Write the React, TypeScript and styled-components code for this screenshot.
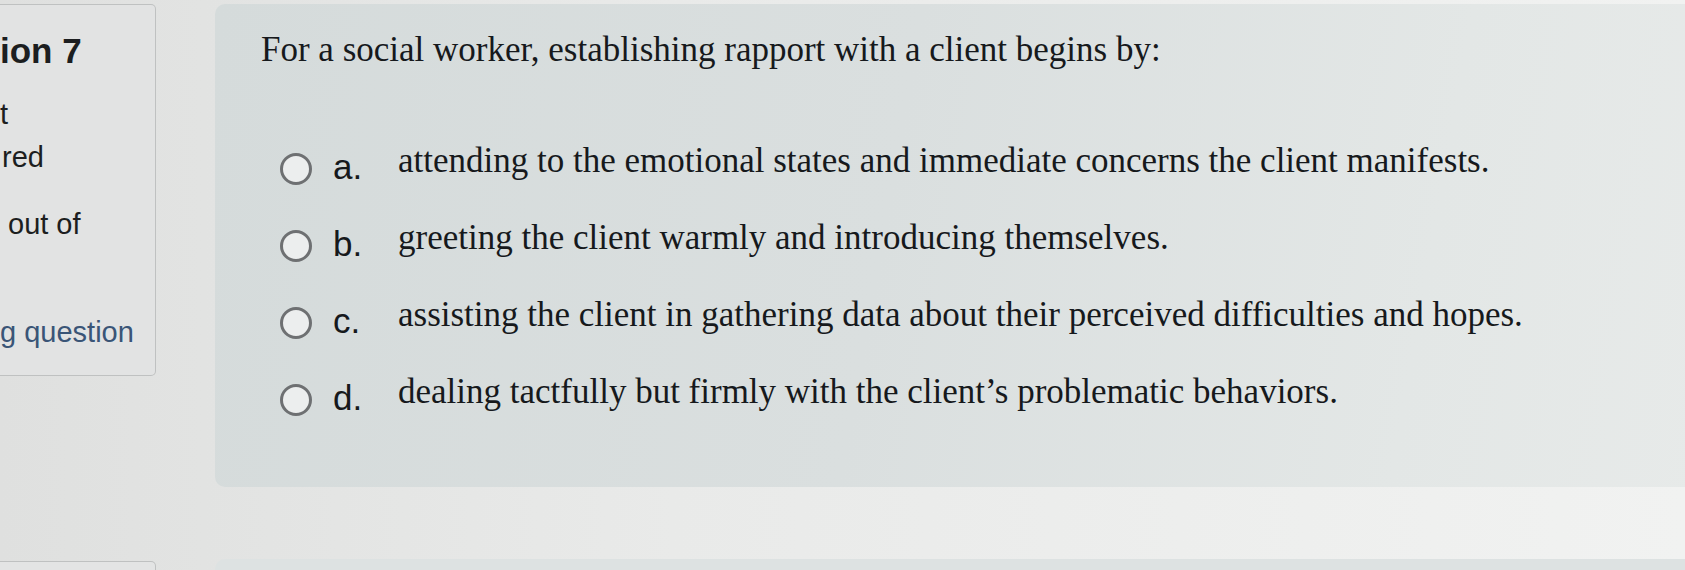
import { Component } from "react";
import styled, { createGlobalStyle } from "styled-components";


interface IAnswer
{
    letter : string
    text : string
}

const answers : IAnswer[] =
[
    { letter: "a.", text: "attending to the emotional states and immediate concerns the client manifests." },
    { letter: "b.", text: "greeting the client warmly and introducing themselves." },
    { letter: "c.", text: "assisting the client in gathering data about their perceived difficulties and hopes." },
    { letter: "d.", text: "dealing tactfully but firmly with the client\u2019s problematic behaviors." },
];

class App extends Component
{
    render() : JSX.Element
    {
        return (
            <>
                <GlobalStyle/>
                <Page>
                    <Sidebar>
                        <InfoCard>
                            <QuestionNo>ion 7</QuestionNo>
                            <InfoLine $gap={22} $indent={0}>t</InfoLine>
                            <InfoLine $gap={0} $indent={2}>red</InfoLine>
                            <InfoLine $gap={24} $indent={8}>out of</InfoLine>
                            <FlagLink href="#">g question</FlagLink>
                        </InfoCard>
                        <NextInfoCard/>
                    </Sidebar>

                    <Main>
                        <QuestionCard>
                            <QuestionText>For a social worker, establishing rapport with a client begins by:</QuestionText>
                            <Answers>
                                {answers.map(answer => (
                                    <AnswerRow key={answer.letter}>
                                        <Radio type="radio" name="q7"/>
                                        <Letter>{answer.letter}</Letter>
                                        <AnswerText>{answer.text}</AnswerText>
                                    </AnswerRow>
                                ))}
                            </Answers>
                        </QuestionCard>
                        <NextCard/>
                    </Main>
                </Page>
            </>
        );
    }
}

const GlobalStyle = createGlobalStyle`
    html, body
    {
        margin: 0;
        padding: 0;
    }

    body
    {
        width: 1685px;
        height: 570px;
        overflow: hidden;
        background: linear-gradient(90deg, #dfe0df 0%, #e9eae9 40%, #f1f2f1 100%);
    }
`;

const Page = styled.div`
    display: flex;
    gap: 59px;
    height: 570px;
    overflow: hidden;
`;

const Sidebar = styled.aside`
    display: flex;
    flex-direction: column;
    flex: 0 0 156px;
`;

const InfoCard = styled.div`
    display: flex;
    flex-direction: column;
    flex-shrink: 0;
    height: 372px;
    box-sizing: border-box;
    margin-top: 4px;
    padding-top: 26px;
    overflow: hidden;

    background: #e2e3e3;
    border: 1px solid #bfc1c1;
    border-left: none;
    border-radius: 0 5px 5px 0;

    font-family: "Liberation Sans", Arial, sans-serif;
    color: #1c1e20;
`;

const QuestionNo = styled.h3`
    margin: 0;
    font-size: 35px;
    line-height: 40px;
    font-weight: 700;
    white-space: nowrap;
`;

const InfoLine = styled.div<{ $gap : number, $indent : number }>`
    margin: ${props => props.$gap}px 0 0 ${props => props.$indent}px;
    font-size: 29px;
    line-height: 43px;
    white-space: nowrap;
`;

const FlagLink = styled.a`
    margin: 65px 0 0 0;
    font-size: 29px;
    line-height: 43px;
    color: #3a5577;
    text-decoration: none;
    white-space: nowrap;
`;

const NextInfoCard = styled.div`
    flex-shrink: 0;
    height: 40px;
    margin-top: 185px;
    background: #e3e4e4;
    border: 1px solid #bfc1c1;
    border-left: none;
    border-radius: 0 5px 0 0;
`;

const Main = styled.main`
    display: flex;
    flex-direction: column;
    flex: 1;
    min-width: 0;
`;

const QuestionCard = styled.section`
    flex-shrink: 0;
    margin: 4px -20px 0 0;
    padding: 24px 0 48px 46px;

    background: linear-gradient(100deg, #d5dbdb 0%, #dadfdf 45%, #e3e7e6 80%, #e7eae9 100%);
    border-radius: 10px 0 0 10px;

    font-family: "Liberation Serif", "Times New Roman", serif;
    color: #16191c;
`;

const QuestionText = styled.p`
    margin: 0;
    font-size: 35px;
    line-height: 44px;
    white-space: nowrap;
`;

const Answers = styled.div`
    display: flex;
    flex-direction: column;
    margin-top: 59px;
`;

const AnswerRow = styled.label`
    display: flex;
    align-items: flex-start;
    height: 77px;
    padding-left: 19px;
    white-space: nowrap;
`;

const Radio = styled.input`
    appearance: none;
    flex: 0 0 auto;
    width: 32px;
    height: 32px;
    box-sizing: border-box;
    margin: 22px 21px 0 0;

    background: #eceeee;
    border: 3px solid #6e7072;
    border-radius: 50%;
`;

const Letter = styled.span`
    flex: 0 0 65px;
    margin-top: 14px;
    font-family: "Liberation Sans", Arial, sans-serif;
    font-size: 35px;
    line-height: 44px;
`;

const AnswerText = styled.span`
    margin-top: 8px;
    font-size: 35px;
    line-height: 44px;
`;

const NextCard = styled.div`
    flex-shrink: 0;
    height: 60px;
    margin: 72px -20px 0 0;
    background: #dde2e2;
    border-radius: 10px 0 0 0;
`;

export default App;
